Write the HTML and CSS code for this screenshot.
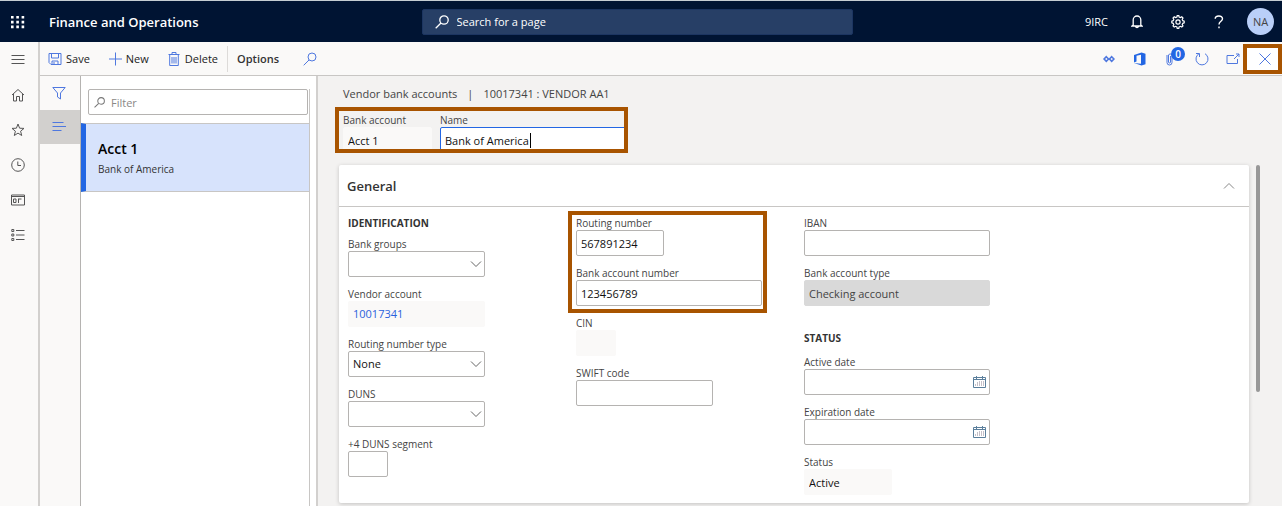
FILE: index.html
```html
<!DOCTYPE html>
<html lang="en">
<head>
<meta charset="utf-8">
<title>Vendor bank accounts</title>
<link rel="stylesheet" href="styles.css">
</head>
<body>
<div class="app">
  <header class="topbar">
    <div class="topbar-start">
      <button class="icon-btn launcher" aria-label="App launcher">
        <svg width="14" height="14" viewBox="0 0 14 14" fill="#fff"><path d="M0 1h2.6v2.6H0zM5.3 1h2.6v2.6H5.3zM10.6 1h2.6v2.6h-2.6zM0 5.8h2.6v2.6H0zM5.3 5.8h2.6v2.6H5.3zM10.6 5.8h2.6v2.6h-2.6zM0 10.6h2.6v2.6H0zM5.3 10.6h2.6v2.6H5.3zM10.6 10.6h2.6v2.6h-2.6z"/></svg>
      </button>
      <span class="brand">Finance and Operations</span>
    </div>
    <label class="page-search">
      <svg width="14" height="14" viewBox="0 0 14 14" fill="none" stroke="#fff" stroke-width="1.3"><circle cx="9" cy="5" r="4.2"/><path d="M6 8 .7 13.3"/></svg>
      <input class="page-search-input" type="text" placeholder="Search for a page" aria-label="Search for a page">
    </label>
    <div class="topbar-end">
      <span class="company">9IRC</span>
      <button class="icon-btn top-btn" aria-label="Notifications">
        <svg width="12" height="14" viewBox="0 0 12 14" fill="none" stroke="#fff" stroke-width="1.3"><path d="M2.2 10V4.8a3.8 3.8 0 0 1 7.6 0V10l1.2 1H1zM4.5 11.5a1.6 1.6 0 0 0 3 0"/></svg>
      </button>
      <button class="icon-btn top-btn" aria-label="Settings">
        <svg width="14" height="14" viewBox="0 0 14 14" fill="none" stroke="#fff" stroke-width="1.2"><path d="m5.9 2 .3-1.4h1.6L8.1 2l1.4.6 1.3-.8 1.2 1.2-.8 1.2.6 1.5 1.4.4v1.8l-1.4.4-.6 1.4.8 1.3-1.2 1.1-1.3-.8-1.4.6-.3 1.4H6.2l-.3-1.4-1.4-.6-1.3.8L2 11l.8-1.3-.6-1.4L.8 7.900V6.100l1.400-.400.600-1.500L2 3l1.200-1.200 1.300.8z"/><circle cx="7" cy="7" r="2.100"/></svg>
      </button>
      <button class="icon-btn top-btn" aria-label="Help">
        <svg width="10" height="14" viewBox="0 0 10 14" fill="none" stroke="#fff" stroke-width="1.4"><path d="M1.200 3.800C1.200.2 8.500 0 8.500 3.800 8.500 6.300 5 6.300 5 9.500M5 11.500v1.700"/></svg>
      </button>
      <button class="avatar">NA</button>
    </div>
  </header>

  <div class="below">
    <nav class="rail" aria-label="Navigation">
      <button class="icon-btn rail-btn" aria-label="Menu"><svg class="ic" viewBox="0 0 14 14"><path d="M.5 2.500h13M.5 6.500h13M.5 10.500h13"/></svg></button>
      <button class="icon-btn rail-btn" aria-label="Home"><svg class="ic" viewBox="0 0 14 14"><path d="M1 7 7 1.500 13 7M2.500 6v7h3V8.500h3V13h3V6"/></svg></button>
      <button class="icon-btn rail-btn" aria-label="Favorites"><svg class="ic" viewBox="0 0 14 14"><path d="m7 1 1.600 4.200 4.400.2-3.400 2.800 1.100 4.300L7 10.100l-3.700 2.400 1.100-4.300L1 5.400l4.400-.2z"/></svg></button>
      <button class="icon-btn rail-btn" aria-label="Recent"><svg class="ic" viewBox="0 0 14 14"><circle cx="7" cy="7" r="6.300"/><path d="M6.800 3.500v4H10"/></svg></button>
      <button class="icon-btn rail-btn" aria-label="Workspaces"><svg class="ic" viewBox="0 0 14 14"><path d="M.5 2h13v10H.5zM.5 3.500h13M2.500 6h2.500v3.500H2.500zM7 6h3.500M7.500 6v4"/></svg></button>
      <button class="icon-btn rail-btn" aria-label="Modules"><svg class="ic" viewBox="0 0 14 14"><path d="M.8 1.500h2v2h-2zM.8 6h2v2h-2zM.8 10.500h2v2h-2zM5 2.500h8.500M5 7h8.500M5 11.500h8.500"/></svg></button>
    </nav>

    <div class="workspace">
      <div class="toolbar">
        <button class="cmd"><svg class="ic blue" viewBox="0 0 14 14"><path d="M1 1.500h12v11H3l-2-2zM3.500 1.500V6h7V1.500M4 12.500V9h6v3.500M6 10v2.500"/></svg>Save</button>
        <button class="cmd cmd-new"><svg class="ic blue" viewBox="0 0 14 14"><path d="M7.500 .5v13M1 7h13"/></svg>New</button>
        <button class="cmd cmd-delete"><svg class="ic blue" viewBox="0 0 14 14"><path d="M1.500 2.500h11M5 2.500v-2h4v2M2.700 2.500v11h8.600v-11M5 5v6.500M7 5v6.500M9 5v6.500"/></svg>Delete</button>
        <button class="cmd cmd-options">Options</button>
        <button class="icon-btn cmd-find" aria-label="Find"><svg class="ic blue" viewBox="0 0 14 14"><circle cx="9" cy="5" r="4"/><path d="M6 8 .7 13.300"/></svg></button>
        <div class="toolbar-end">
          <button class="icon-btn tool" aria-label="Power Apps"><svg class="ic blue strong" viewBox="0 0 14 14"><path d="M4.300 4.700 6.500 7 4.300 9.300 2.100 7zM9.700 4.700 11.900 7 9.700 9.300 7.500 7z"/></svg></button>
          <button class="icon-btn tool" aria-label="Office"><svg width="12" height="14" viewBox="0 0 12 14"><path fill="#2266e3" d="M0 3 7.500.5 11.500 1.700v10.600L7.500 13.500 0 11l7 .8V2.700L2.500 3.800v5.700L0 10.600z"/></svg></button>
          <button class="icon-btn tool attach" aria-label="Attachments"><svg class="ic blue" viewBox="0 0 14 14"><path d="M3 3v7.500a2.500 2.500 0 0 0 5 0V3a2 2 0 0 0-3.500 0v7a1 1 0 0 0 2 0V4"/></svg><span class="badge">0</span></button>
          <button class="icon-btn tool" aria-label="Refresh"><svg class="ic blue" viewBox="0 0 14 14"><path d="M4 1.700a6 6 0 1 0 6 0M1 1.500h3.500V5"/></svg></button>
          <button class="icon-btn tool" aria-label="Open in new window"><svg class="ic blue" viewBox="0 0 14 14"><path d="M8 3.500H1v8h10.500V7M8 7l5-5M10 2h3v3"/></svg></button>
          <button class="icon-btn tool close" aria-label="Close"><svg class="ic blue" viewBox="0 0 14 14"><path d="m1.500 1.500 11 11M12.500 1.500l-11 11"/></svg></button>
        </div>
      </div>

      <div class="panes">
        <div class="tabs">
          <button class="icon-btn tab" aria-label="Filters"><svg class="ic blue" viewBox="0 0 14 14"><path d="M.8 1.500h12.400L8.500 7v6l-3-2V7z"/></svg></button>
          <button class="icon-btn tab tab-active" aria-label="List"><svg class="ic blue" viewBox="0 0 14 14"><path d="M.5 2.500h11M.5 6.500h13.500M.5 10.500h9"/></svg></button>
        </div>
        <aside class="list-pane">
          <div class="list">
            <label class="filter">
              <svg width="11" height="11" viewBox="0 0 14 14" fill="none" stroke="#777" stroke-width="1.300"><circle cx="9" cy="5" r="4.200"/><path d="M6 8 .7 13.300"/></svg>
              <input class="filter-input" type="text" placeholder="Filter" aria-label="Filter">
            </label>
            <button class="list-item">
              <span class="item-title">Acct 1</span>
              <span class="item-sub">Bank of America</span>
            </button>
          </div>
        </aside>
        <main class="detail">
          <div class="crumbs"><span>Vendor bank accounts</span><span>|</span><span>10017341 : VENDOR AA1</span></div>
          <div class="record-head marked">
            <div class="field w-acct"><label class="label" for="acct">Bank account</label><input class="box flat" id="acct" value="Acct 1" readonly></div>
            <div class="field w-date focused"><label class="label" for="name">Name</label><input class="box" id="name" value="Bank of America"><span class="caret"></span></div>
          </div>
          <div class="scroller">
            <section class="card">
              <h2 class="card-head">General
                <button class="icon-btn" aria-label="Collapse"><svg width="12" height="12" viewBox="0 0 12 12" fill="none" stroke="#888"><path d="m1 8.500 5-5 5 5"/></svg></button>
              </h2>
              <div class="columns">
                <div class="column">
                  <h3 class="group">IDENTIFICATION</h3>
                  <div class="field w-mid"><label class="label" for="groups">Bank groups</label><select class="box" id="groups"><option></option></select><svg class="chev" viewBox="0 0 12 12"><path d="m1 3.500 5 5 5-5"/></svg></div>
                  <div class="field w-mid"><span class="label">Vendor account</span><a class="box flat link" href="#">10017341</a></div>
                  <div class="field w-mid"><label class="label" for="rtype">Routing number type</label><select class="box" id="rtype"><option>None</option></select><svg class="chev" viewBox="0 0 12 12"><path d="m1 3.500 5 5 5-5"/></svg></div>
                  <div class="field w-mid"><label class="label" for="duns">DUNS</label><select class="box" id="duns"><option></option></select><svg class="chev" viewBox="0 0 12 12"><path d="m1 3.500 5 5 5-5"/></svg></div>
                  <div class="field w-tiny"><label class="label" for="duns4">+4 DUNS segment</label><input class="box" id="duns4"></div>
                </div>
                <div class="column">
                  <div class="marked numbers">
                    <div class="field w-small"><label class="label" for="routing">Routing number</label><input class="box" id="routing" value="567891234"></div>
                    <div class="field w-date"><label class="label" for="number">Bank account number</label><input class="box" id="number" value="123456789"></div>
                  </div>
                  <div class="field w-tiny"><label class="label" for="cin">CIN</label><input class="box flat" id="cin" readonly></div>
                  <div class="field w-mid"><label class="label" for="swift">SWIFT code</label><input class="box" id="swift"></div>
                </div>
                <div class="column">
                  <div class="field w-date"><label class="label" for="iban">IBAN</label><input class="box" id="iban"></div>
                  <div class="field w-date"><label class="label" for="type">Bank account type</label><input class="box off" id="type" value="Checking account" disabled></div>
                  <h3 class="group group-next">STATUS</h3>
                  <div class="field w-date"><label class="label" for="active">Active date</label><input class="box" id="active"><button class="icon-btn cal" aria-label="Pick active date"><svg width="13" height="12" viewBox="0 0 13 12" fill="none"><path stroke="#5b7f9c" d="M.5 1.500h12v10H.5zM.5 3.500h12M3.500 0v3M9.500 0v3"/><path stroke="#c5c0c8" d="M2.500 8v2M4.500 6v4M6.500 5v5M8.500 5v5M10.500 5v5"/></svg></button></div>
                  <div class="field w-date"><label class="label" for="expires">Expiration date</label><input class="box" id="expires"><button class="icon-btn cal" aria-label="Pick expiration date"><svg width="13" height="12" viewBox="0 0 13 12" fill="none"><path stroke="#5b7f9c" d="M.5 1.500h12v10H.5zM.5 3.500h12M3.500 0v3M9.500 0v3"/><path stroke="#c5c0c8" d="M2.500 8v2M4.500 6v4M6.500 5v5M8.500 5v5M10.500 5v5"/></svg></button></div>
                  <div class="field w-small"><label class="label" for="status">Status</label><input class="box flat" id="status" value="Active" readonly></div>
                </div>
              </div>
            </section>
            <div class="scroll-thumb"></div>
          </div>
        </main>
      </div>
    </div>
  </div>
</div>
</body>
</html>
```
FILE: styles.css
```css
* { box-sizing: border-box; }

body {
  margin: 0;
  font-family: "Open Sans", "Noto Sans", sans-serif;
  font-size: 11px;
  color: #222;
  background: #f3f2f1;
}

button, input, select { font: inherit; color: inherit; }

.app { display: flex; flex-direction: column; min-height: 100vh; }

.icon-btn {
  display: inline-flex;
  align-items: center;
  justify-content: center;
  padding: 0;
  border: 0;
  background: none;
}

.ic { width: 14px; height: 14px; fill: none; stroke: #555; flex: none; }
.blue { stroke: #4f78df; }
.strong { stroke-width: 1.6; }

/* Top bar */
.topbar {
  display: grid;
  grid-template-columns: 1fr minmax(160px, 431px) 1fr;
  align-items: center;
  height: 42px;
  padding-right: 8px;
  border-top: 1px solid #c5cdd3;
  background: #001433;
  color: #fff;
}
.topbar-start, .topbar-end { display: flex; align-items: center; }
.topbar-end { justify-content: flex-end; }
.launcher { width: 36px; margin-right: 13px; }
.brand { font-size: 13px; font-weight: 600; white-space: nowrap; }
.page-search {
  display: flex;
  align-items: center;
  gap: 8px;
  height: 26px;
  padding: 0 12px;
  border: 1px solid #1c3561;
  border-radius: 2px;
  background: #273f66;
}
.page-search-input {
  flex: 1;
  min-width: 0;
  padding: 0;
  border: 0;
  outline: 0;
  background: none;
}
.page-search-input::placeholder { color: #fff; opacity: 1; }
.company { margin-right: 8px; }
.top-btn { width: 41px; height: 40px; }
.avatar {
  width: 27px;
  height: 27px;
  margin-left: 8px;
  padding: 0;
  border: 0;
  border-radius: 50%;
  background: #b9cff8;
  color: #444;
}

/* Left navigation */
.below { display: flex; flex: 1; }
.rail {
  display: flex;
  flex-direction: column;
  flex: none;
  width: 40px;
  padding-right: 2px;
  border-right: 2px solid #d2d0ce;
  background: #faf9f8;
}
.rail-btn { height: 35px; }
.workspace { display: flex; flex-direction: column; flex: 1; min-width: 0; }

/* Command bar */
.toolbar {
  display: flex;
  align-items: center;
  height: 34px;
  padding-left: 8px;
  border-bottom: 1px solid #c8c6c4;
  background: #faf9f8;
}
.cmd {
  display: flex;
  align-items: center;
  gap: 4px;
  height: 26px;
  padding: 0;
  border: 0;
  background: none;
}
.cmd-new { margin-left: 18px; }
.cmd-delete { margin-left: 18px; }
.cmd-options {
  margin-left: 9px;
  padding-left: 9px;
  border-left: 1px solid #dddbd9;
  font-weight: 600;
  color: #333;
}
.cmd-find { margin-left: 24px; }
.toolbar-end { display: flex; align-items: center; margin-left: auto; }
.tool { width: 20px; height: 30px; margin-left: 11px; }
.attach { position: relative; }
.badge {
  position: absolute;
  top: 3px;
  right: -4px;
  width: 14px;
  height: 14px;
  border-radius: 50%;
  background: #2266e3;
  color: #fff;
  font-size: 10px;
  line-height: 14px;
  font-weight: 600;
}
.close {
  width: 39px;
  margin-left: 0;
  padding-left: 4px;
  border: 4px solid #a85400;
  background: #fff;
}

/* Side tabs and list */
.panes { display: flex; flex: 1; }
.tabs {
  display: flex;
  flex-direction: column;
  flex: none;
  width: 41px;
  border-right: 1px solid #b5b3b1;
  background: #faf9f8;
}
.tab { height: 34px; padding-right: 2px; }
.tab-active { background: #d2d0ce; }
.list-pane {
  flex: none;
  width: 237px;
  padding-right: 6px;
  border-right: 2px solid #d2d0ce;
  background: #fff;
}
.list { height: 100%; border-right: 1px solid #c8c6c4; }
.filter {
  display: flex;
  align-items: center;
  gap: 6px;
  height: 26px;
  margin: 13px 1px 8px 7px;
  padding: 0 5px;
  border: 1px solid #b5b3b1;
  border-radius: 2px;
}
.filter-input { flex: 1; min-width: 0; padding: 0; border: 0; outline: 0; background: none; }
.filter-input::placeholder { color: #8a8886; opacity: 1; }
.list-item {
  display: flex;
  flex-direction: column;
  justify-content: center;
  align-items: flex-start;
  gap: 4px;
  width: 100%;
  height: 69px;
  padding: 0 12px;
  border: 1px solid #c8c6c4;
  border-width: 1px 0;
  border-left: 5px solid #2266e3;
  background: #d7e3fc;
}
.item-title { font-size: 14px; line-height: 18px; font-weight: 600; color: #000; }
.item-sub { font-size: 10px; line-height: 14px; color: #333; }

/* Record details */
.detail { display: flex; flex-direction: column; flex: 1; min-width: 0; padding: 9px 0 3px 21px; }
.crumbs { display: flex; gap: 10px; padding-left: 4px; line-height: 18px; color: #444; }
.record-head { display: flex; align-self: flex-start; gap: 8px; margin: 10px 0 12px 4px; }

/* Outline that lies over the fields it calls out */
.marked { position: relative; }
.marked::after {
  content: "";
  position: absolute;
  inset: -5px -5px -7px -8px;
  border: 4px solid #a85400;
  pointer-events: none;
}
.record-head.marked::after { inset: -6px -2px 0 -8px; }

.scroller { display: flex; align-items: flex-start; gap: 7px; flex: 1; }
.card {
  flex: 1;
  min-width: 0;
  border-radius: 2px;
  background: #fff;
  box-shadow: 0 1px 4px rgba(0, 0, 0, 0.2);
}
.card-head {
  display: flex;
  align-items: center;
  justify-content: space-between;
  height: 42px;
  margin: 0;
  padding: 0 14px 0 8px;
  border-bottom: 1px solid #c8c6c4;
  font-size: 13px;
  font-weight: 600;
  color: #333;
}
.scroll-thumb { width: 4px; height: 227px; margin-right: 22px; border-radius: 2px; background: #989898; }

.columns {
  display: grid;
  grid-template-columns: repeat(auto-fill, 228px);
  padding: 9px 9px 8px;
}
.group { margin: 0 0 7px; font-size: 10px; line-height: 14px; font-weight: 700; color: #333; }
.group-next { margin: 25px 0 10px; }

.field { position: relative; display: flex; flex-direction: column; margin-bottom: 10px; }
.record-head .field, .field:last-child { margin-bottom: 0; }
.numbers { width: 186px; margin-bottom: 10px; }
.w-tiny { width: 40px; }
.w-small { width: 88px; }
.w-acct { width: 89px; }
.w-mid { width: 137px; }
.w-date { width: 186px; }
.label { font-size: 10px; line-height: 14px; white-space: nowrap; color: #444; }
.box {
  width: 100%;
  height: 26px;
  padding: 0 4px;
  border: 1px solid #b5b3b1;
  border-radius: 2px;
  outline: 0;
  background: #fff;
  color: #111;
  line-height: 24px;
  appearance: none;
}
.flat { border-color: #faf9f8; background: #faf9f8; }
.off { border-color: #d9d9d9; background: #d9d9d9; color: #444; }
.link { color: #2a62dd; text-decoration: none; }
.focused .box { border-color: #2266e3; }
.caret { position: absolute; top: 20px; left: 90px; width: 1px; height: 15px; background: #000; }
.chev {
  position: absolute;
  right: 3px;
  bottom: 7px;
  width: 12px;
  height: 12px;
  fill: none;
  stroke: #666;
  pointer-events: none;
}
.cal { position: absolute; right: 4px; bottom: 7px; }
```
